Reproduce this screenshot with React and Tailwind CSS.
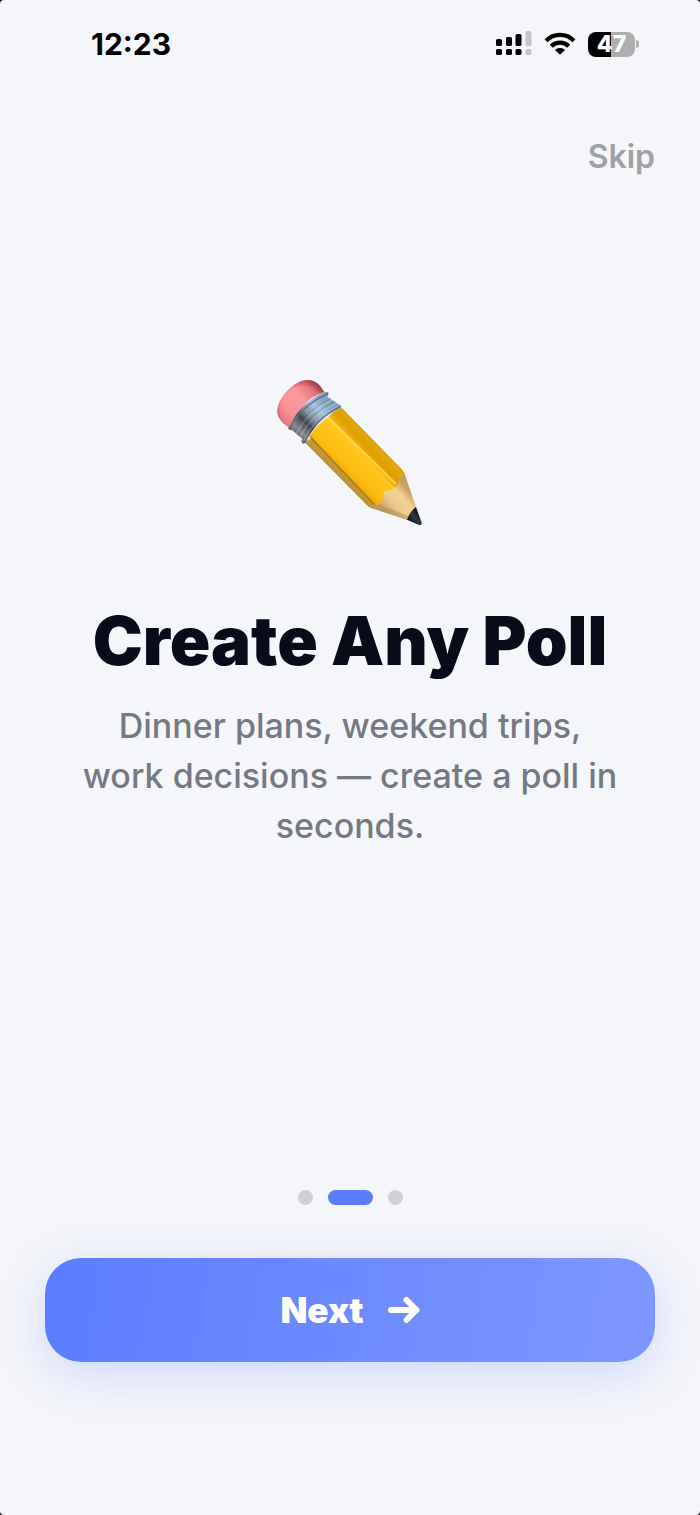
import React from "react";

function SignalIcon() {
  return (
    <svg viewBox="0 0 36 26" className="h-[26px] w-9" aria-hidden="true">
      <g fill="#000">
        <rect x="0" y="8" width="6" height="7" rx="1.6" />
        <rect x="10" y="6" width="6" height="9" rx="1.6" />
        <rect x="19.500" y="3" width="6" height="12" rx="1.6" />
        <rect x="0" y="18" width="6" height="6" rx="1.6" />
        <rect x="10" y="18" width="6" height="6" rx="1.6" />
        <rect x="19.500" y="18" width="6" height="6" rx="1.6" />
      </g>
      <g fill="#c5c6c9">
        <rect x="29.500" y="0" width="6" height="15" rx="1.6" />
        <rect x="29.500" y="18" width="6" height="6" rx="1.6" />
      </g>
    </svg>
  );
}

function WifiIcon() {
  return (
    <svg viewBox="0 0 32 24" className="h-6 w-8" aria-hidden="true">
      <g fill="none" stroke="#000" strokeWidth="4.200">
        <path d="M2 8.700C9.800 .9 22.200 .9 30 8.700" />
        <path d="M7.300 14.200C12.200 9.400 19.800 9.400 24.700 14.200" />
      </g>
      <path d="M11 17.900C13.800 15.500 18.200 15.500 21 17.900L16.600 22.300Q16 22.900 15.400 22.300Z" fill="#000" />
    </svg>
  );
}

function Battery() {
  return (
    <div className="flex items-center gap-px">
      <div className="flex h-[25px] w-[47px] items-center justify-center rounded-lg bg-linear-to-r from-black from-48% to-[#adaeb0] to-48% text-[23px] leading-none font-extrabold text-white">
        47
      </div>
      <div className="h-2 w-[3px] rounded-r-full bg-[#b2b3b5]" />
    </div>
  );
}

function Pencil() {
  return (
    <svg viewBox="0 0 540 525" className="h-[175px] w-[180px]" role="img" aria-label="Pencil">
      <defs>
        <linearGradient id="eraser" gradientUnits="userSpaceOnUse" x1="65" y1="165" x2="185" y2="65">
          <stop offset="0" stopColor="#e27a81" />
          <stop offset="0.220" stopColor="#f99297" />
          <stop offset="0.550" stopColor="#fa9a9f" />
          <stop offset="0.800" stopColor="#e9787f" />
          <stop offset="1" stopColor="#a94a52" />
        </linearGradient>
        <radialGradient id="eraserEdge" gradientUnits="userSpaceOnUse" cx="128" cy="132" r="94">
          <stop offset="0.700" stopColor="#7b2630" stopOpacity="0" />
          <stop offset="1" stopColor="#7b2630" stopOpacity="0.600" />
        </radialGradient>
        <linearGradient id="metal" gradientUnits="userSpaceOnUse" x1="105" y1="215" x2="225" y2="97">
          <stop offset="0" stopColor="#5d6061" />
          <stop offset="0.140" stopColor="#8a8c8c" />
          <stop offset="0.320" stopColor="#41474c" />
          <stop offset="0.460" stopColor="#8796a3" />
          <stop offset="0.640" stopColor="#a9c4df" />
          <stop offset="0.800" stopColor="#8aa5c0" />
          <stop offset="1" stopColor="#7f9ab6" />
        </linearGradient>
        <linearGradient id="side" gradientUnits="userSpaceOnUse" x1="218" y1="326" x2="250" y2="294">
          <stop offset="0" stopColor="#b98c2c" />
          <stop offset="0.600" stopColor="#c79a3c" />
          <stop offset="1" stopColor="#a87a12" />
        </linearGradient>
        <linearGradient id="face" gradientUnits="userSpaceOnUse" x1="236" y1="312" x2="304" y2="242">
          <stop offset="0" stopColor="#f1aa0b" />
          <stop offset="0.250" stopColor="#fdbd10" />
          <stop offset="1" stopColor="#ffca22" />
        </linearGradient>
        <linearGradient id="topFace" gradientUnits="userSpaceOnUse" x1="300" y1="253" x2="347" y2="211">
          <stop offset="0" stopColor="#f2b10b" />
          <stop offset="0.300" stopColor="#dda000" />
          <stop offset="1" stopColor="#e9ae0b" />
        </linearGradient>
        <linearGradient id="wood" gradientUnits="userSpaceOnUse" x1="385" y1="446" x2="454" y2="384">
          <stop offset="0" stopColor="#c9a468" />
          <stop offset="0.350" stopColor="#edcb8d" />
          <stop offset="0.700" stopColor="#f2d294" />
          <stop offset="1" stopColor="#c5a05e" />
        </linearGradient>
        <linearGradient id="lead" gradientUnits="userSpaceOnUse" x1="448" y1="468" x2="480" y2="445">
          <stop offset="0" stopColor="#11161d" />
          <stop offset="0.500" stopColor="#2f3741" />
          <stop offset="1" stopColor="#0d1117" />
        </linearGradient>
        <filter id="soft" x="-20%" y="-20%" width="140%" height="140%">
          <feGaussianBlur stdDeviation="2" />
        </filter>
      </defs>

      <path d="M88 188C65 174 48 154 52 132C57 103 79 76 105 58C132 40 160 40 180 62L193 81Q153 92 126 128Q102 158 88 188Z" fill="url(#eraser)" />
      <path d="M88 188C65 174 48 154 52 132C57 103 79 76 105 58C132 40 160 40 180 62L193 81Q153 92 126 128Q102 158 88 188Z" fill="url(#eraserEdge)" />

      <path d="M134 232L166 212L350 418L331 428L324 424Z" fill="url(#side)" />
      <path d="M149 213Q172 177 206 156L413 350L430 380L380 425L340 417Z" fill="url(#face)" />
      <path d="M205 156Q222 137 244 128L425 313Q437 329 438 346L424 370L411 365L403 366Z" fill="url(#topFace)" />
      <path d="M149 214L343 418" stroke="#86640f" strokeWidth="5" opacity="0.550" filter="url(#soft)" />
      <path d="M207 160L407 357" stroke="#ffdb55" strokeWidth="7" opacity="0.800" filter="url(#soft)" />
      <path d="M246 131L424 314Q434 326 437 341" fill="none" stroke="#b98a0b" strokeWidth="3" opacity="0.700" filter="url(#soft)" />

      <path d="M331 428Q338 417 360 420Q367 412 368 399Q367 380 376 378Q398 376 407 367Q417 359 416 343Q418 331 426 331Q434 331 438 339L468 426L442 465Z" fill="url(#wood)" />
      <path d="M331 428Q340 417 360 420L445 453L442 465Z" fill="#a98d5d" opacity="0.500" filter="url(#soft)" />
      <path d="M468 426L485 473Q486 481 477 480L441 464Q450 439 468 426Z" fill="url(#lead)" />

      <path d="M91 180Q118 116 193 80L205 81Q207 91 202 95L238 119Q246 122 242 129Q166 166 139 231Q130 239 126 233Q122 228 127 222L96 195Q83 197 85 187Z" fill="url(#metal)" />
      <g fill="none" strokeLinecap="round">
        <path d="M90 190Q120 124 202 86" stroke="#48586a" strokeWidth="5" opacity="0.700" />
        <path d="M93 185Q124 120 200 82" stroke="#d5e3f1" strokeWidth="2" opacity="0.400" />
        <path d="M105 201Q138 134 212 101" stroke="#43515e" strokeWidth="3" opacity="0.300" />
        <path d="M109 204Q142 139 216 104" stroke="#dceafa" strokeWidth="3" opacity="0.350" />
        <path d="M115 211Q149 145 224 110" stroke="#43515e" strokeWidth="3" opacity="0.300" />
        <path d="M120 215Q153 150 229 115" stroke="#dceafa" strokeWidth="3" opacity="0.350" />
        <path d="M131 233Q161 164 241 125" stroke="#465666" strokeWidth="4" opacity="0.650" />
        <path d="M131 228Q160 159 237 121" stroke="#c2dbf3" strokeWidth="3" opacity="0.450" />
      </g>
    </svg>
  );
}

function ArrowIcon() {
  return (
    <svg viewBox="0 0 32 28" className="h-7 w-8" fill="none" stroke="currentColor" strokeWidth="6" strokeLinecap="round" strokeLinejoin="round" aria-hidden="true">
      <path d="M3 14H28M18.500 4L28.500 14L18.500 24" />
    </svg>
  );
}

export default function App() {
  return (
    <div className="min-h-screen bg-black font-['Inter',sans-serif]">
      <div className="flex min-h-screen flex-col rounded-[4px] bg-[#f5f6fa]">
        <header className="flex h-[88px] items-center justify-between pr-[61px] pl-[91px]">
          <time className="text-[30px] leading-9 font-bold text-black">12:23</time>
          <div className="flex items-center gap-3">
            <SignalIcon />
            <WifiIcon />
            <Battery />
          </div>
        </header>

        <div className="flex justify-end px-[45px] pt-[49px]">
          <button type="button" className="text-[32px] leading-10 font-semibold text-[#a0a1a3]">
            Skip
          </button>
        </div>

        <main className="flex flex-1 flex-col items-center justify-center px-[45px] pb-[152px] text-center">
          <Pencil />
          <h1 className="mt-[61px] text-[67px] leading-[80px] font-black text-[#080c18]">
            Create Any Poll
          </h1>
          <p className="mt-5 max-w-[550px] text-[34px] leading-[50px] font-medium text-[#757982]">
            Dinner plans, weekend trips, work decisions — create a poll in seconds.
          </p>
        </main>

        <footer className="px-[45px] pb-[153px]">
          <div className="flex justify-center gap-[15px]">
            <span className="size-[15px] rounded-full bg-[#d0d1d4]" />
            <span className="h-[15px] w-[45px] rounded-full bg-[#5b7cff]" />
            <span className="size-[15px] rounded-full bg-[#d0d1d4]" />
          </div>
          <button
            type="button"
            className="mt-[53px] flex h-[104px] w-full items-center justify-center gap-6 rounded-[36px] bg-linear-100 from-[#5b7cff] to-[#7f97ff] text-[35px] leading-10 font-black text-white shadow-[0_12px_48px_rgba(91,124,255,0.25)]"
          >
            Next
            <ArrowIcon />
          </button>
        </footer>
      </div>
    </div>
  );
}
